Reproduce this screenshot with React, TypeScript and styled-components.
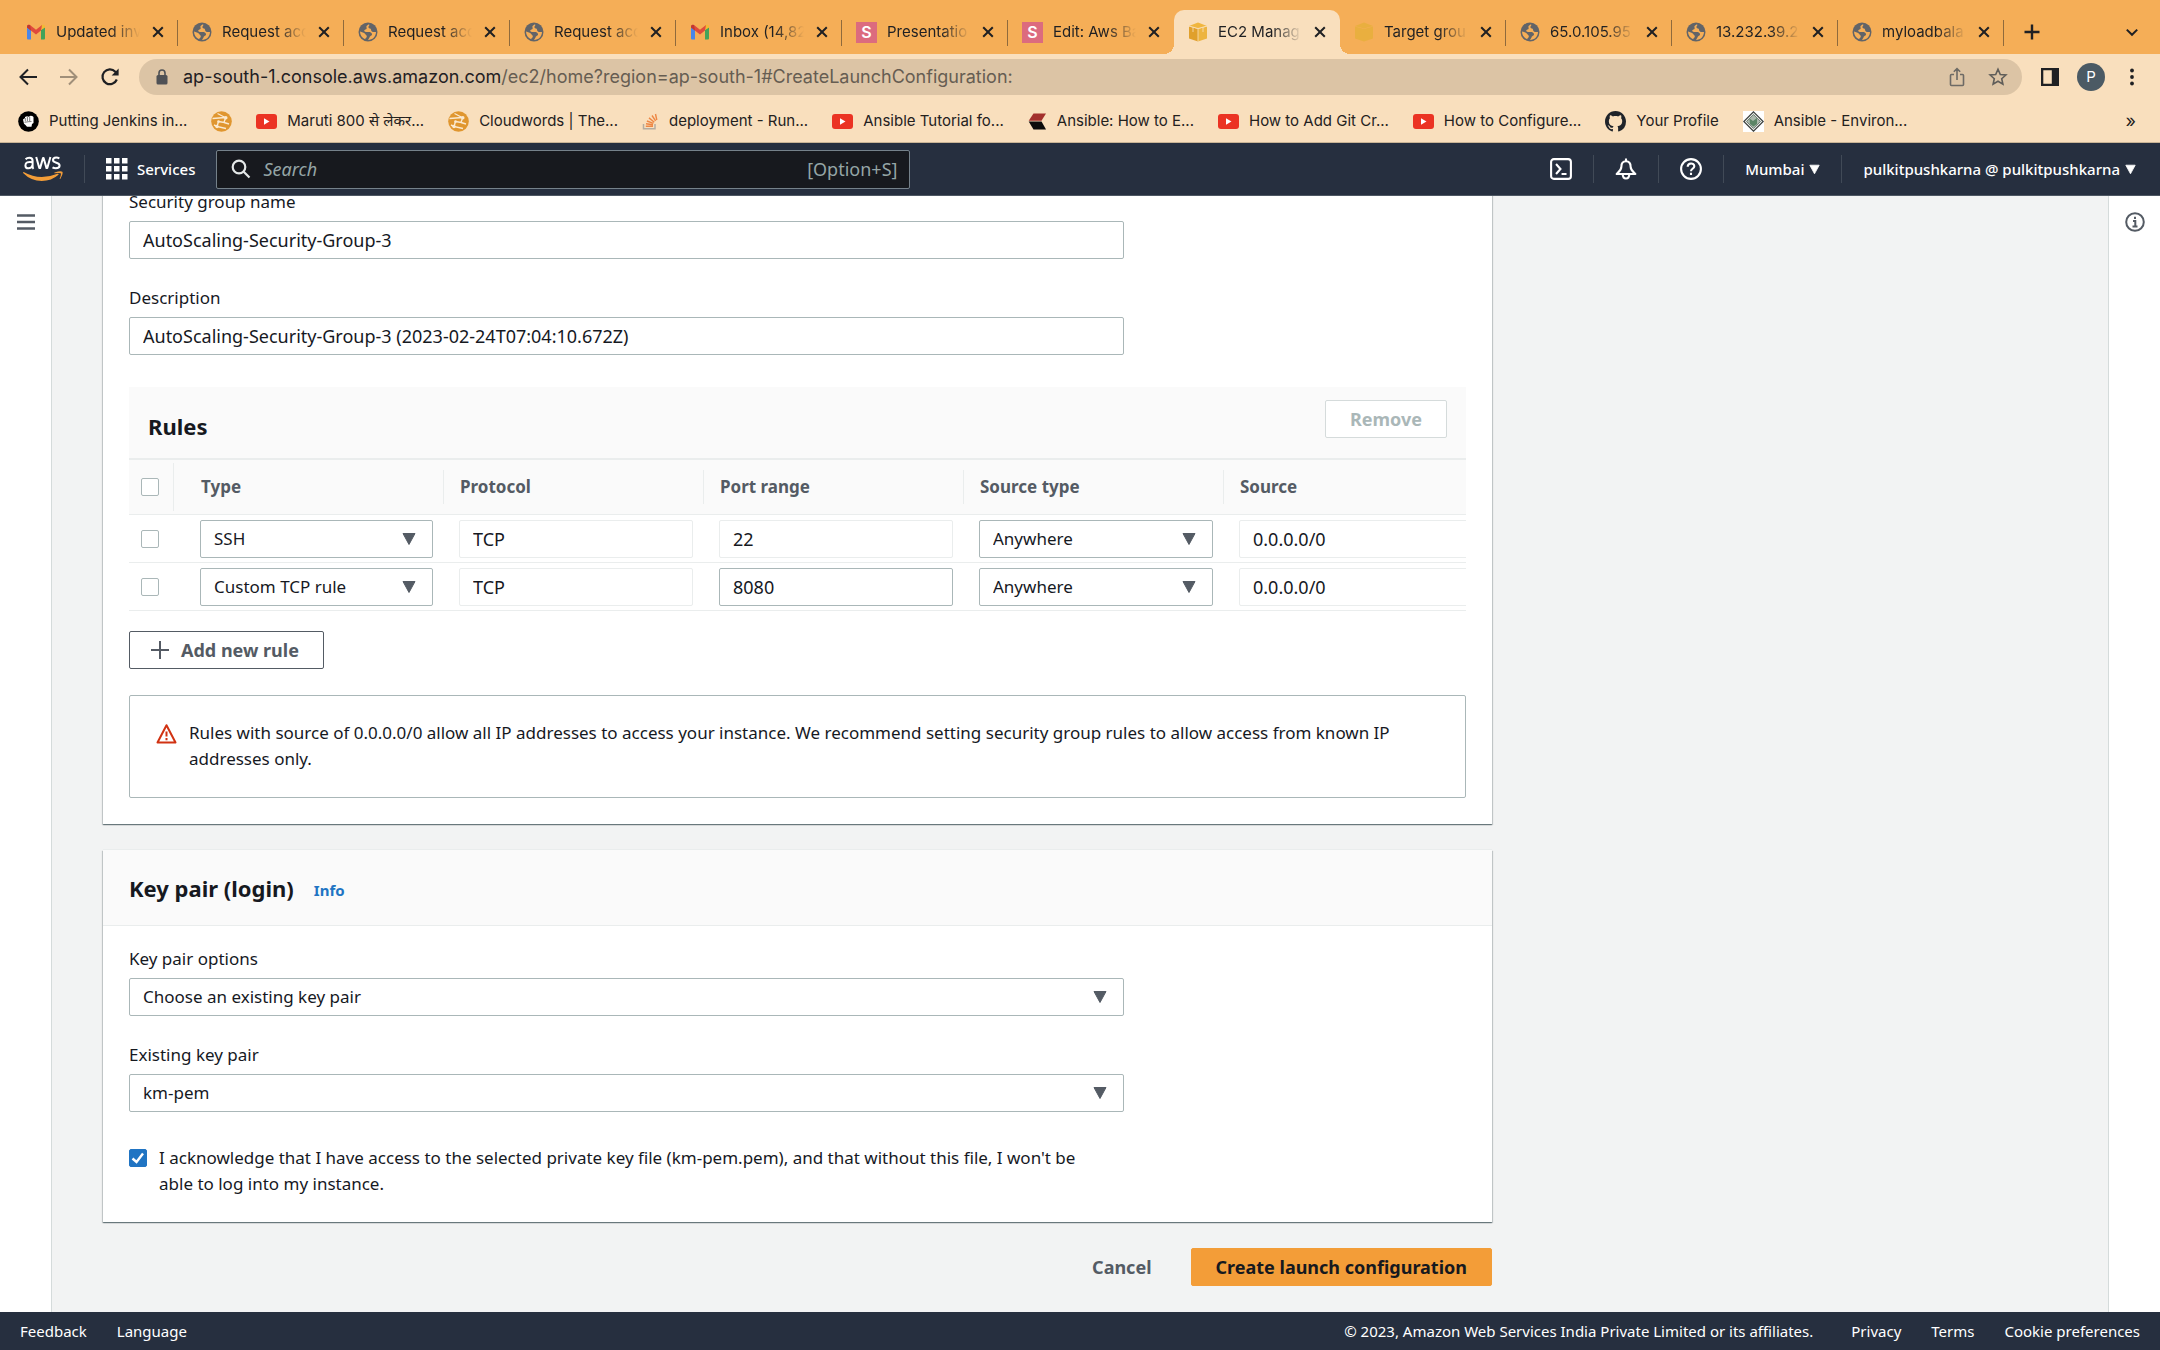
import React, { useLayoutEffect, useRef, useState } from "react";
import styled, { createGlobalStyle, css } from "styled-components";

const UI = `"Noto Sans", "Open Sans", sans-serif`;
const CHROME = `Inter, Roboto, "Noto Sans", sans-serif`;

const GlobalStyle = createGlobalStyle`
  *, *::before, *::after { box-sizing: border-box; }
  body { margin: 0; background: #f2f3f3; }
  button, input, select { font: inherit; color: inherit; margin: 0; }
  button { border: 0; padding: 0; background: none; cursor: pointer; }
  a { color: inherit; text-decoration: none; }
  svg { display: block; flex: none; }
`;

const Page = styled.div`
  height: 100vh;
  display: flex;
  flex-direction: column;
  font: 17px/26px ${UI};
  color: #16191f;
`;

/* ---------- browser window ---------- */

const TabStrip = styled.div`
  flex: none;
  height: 54px;
  padding: 10px 18px 0 12px;
  display: flex;
  background: #f5ae57;
  font: 15px/20px ${CHROME};
  color: #1f2023;
`;

const Tab = styled.div<{ $active?: boolean; $divided?: boolean }>`
  position: relative;
  flex: 0 1 166px;
  min-width: 0;
  height: 44px;
  padding: 0 12px 0 14px;
  display: flex;
  align-items: center;
  gap: 10px;
  ${(p) =>
    p.$divided &&
    css`
      &::after {
        content: "";
        position: absolute;
        right: 0;
        top: 10px;
        height: 26px;
        width: 1px;
        background: #8f6a3c;
      }
    `}
  ${(p) =>
    p.$active &&
    css`
      background: #f9dfbd;
      border-radius: 10px 10px 0 0;
      &::before,
      &::after {
        content: "";
        position: absolute;
        bottom: 0;
        width: 10px;
        height: 10px;
      }
      &::before {
        left: -10px;
        background: radial-gradient(circle at 0 0, transparent 10px, #f9dfbd 10px);
      }
      &::after {
        right: -10px;
        background: radial-gradient(circle at 100% 0, transparent 10px, #f9dfbd 10px);
      }
    `}
`;

const TabTitle = styled.span`
  flex: 1;
  min-width: 0;
  overflow: hidden;
  white-space: nowrap;
  mask-image: linear-gradient(90deg, #000 65%, transparent);
`;

const IconButton = styled.button`
  flex: none;
  display: flex;
  align-items: center;
  justify-content: center;
`;

const NewTab = styled(IconButton)`
  width: 32px;
  height: 44px;
  margin-left: 12px;
`;

const TabMenu = styled(IconButton)`
  width: 20px;
  height: 44px;
  margin-left: auto;
`;

const SLogo = styled.span`
  flex: none;
  width: 21px;
  height: 21px;
  background: #dc6b7e;
  color: #fff;
  font: 600 16px/21px ${CHROME};
  text-align: center;
`;

const Toolbar = styled.div`
  flex: none;
  height: 46px;
  padding: 0 18px;
  display: flex;
  align-items: center;
  background: #f9dfbd;
  color: #1f2023;
  font-family: ${CHROME};
`;

const NavButtons = styled.div`
  display: flex;
  gap: 21px;
  margin-right: 19px;
`;

const Omnibox = styled.div`
  flex: 1;
  height: 36px;
  padding: 0 14px 0 16px;
  display: flex;
  align-items: center;
  gap: 14px;
  border-radius: 18px;
  background: #dcc4a5;
  font-size: 18px;
  line-height: 24px;
`;

const Address = styled.a`
  flex: 1;
  white-space: nowrap;
  color: #665d52;
  b {
    font-weight: 400;
    color: #1f2023;
  }
`;

const OmniActions = styled.div`
  display: flex;
  gap: 22px;
`;

const WindowActions = styled.div`
  margin-left: 18px;
  display: flex;
  align-items: center;
  gap: 17px;
`;

const Avatar = styled.button`
  width: 28px;
  height: 28px;
  border-radius: 50%;
  background: #4b5a64;
  color: #fff;
  font-size: 15px;
  line-height: 28px;
`;

const Bookmarks = styled.nav`
  flex: none;
  height: 43px;
  padding: 0 24px 0 18px;
  display: flex;
  align-items: center;
  gap: 24px;
  background: #f9dfbd;
  border-bottom: 1px solid #c9b496;
  font: 15px/20px ${CHROME};
  color: #24211d;
`;

const Bookmark = styled.a`
  display: flex;
  align-items: center;
  gap: 10px;
  white-space: nowrap;
`;

const More = styled.button`
  margin-left: auto;
  font-size: 18px;
`;

/* ---------- console header ---------- */

const Header = styled.header`
  flex: none;
  height: 53px;
  padding: 0 24px 0 23px;
  display: flex;
  align-items: center;
  gap: 21px;
  background: #262f3f;
  border-bottom: 1px solid #4d5763;
  color: #fff;
  font-size: 15px;
  font-weight: 500;
`;

const Divider = styled.i`
  flex: none;
  width: 1px;
  height: 28px;
  background: #414a57;
`;

const SearchBox = styled.label`
  flex: 0 1 694px;
  height: 39px;
  padding: 0 12px 0 14px;
  display: flex;
  align-items: center;
  gap: 12px;
  background: #17191e;
  border: 1px solid #75818a;
  border-radius: 2px;
  color: #95a5a6;
  font-size: 18px;
  font-weight: 400;
  input {
    flex: 1;
    min-width: 0;
    padding: 0;
    border: 0;
    outline: 0;
    background: none;
  }
  input::placeholder {
    color: #95a5a6;
    font-style: italic;
    opacity: 1;
  }
`;

const HeaderTools = styled.div`
  margin-left: auto;
  display: flex;
  align-items: center;
  gap: 21px;
`;

const MenuButton = styled.button<{ $wide?: boolean }>`
  display: flex;
  align-items: center;
  gap: ${(p) => (p.$wide ? 9 : 5)}px;
  white-space: nowrap;
`;

/* ---------- console body ---------- */

const Body = styled.div`
  flex: 1;
  min-height: 0;
  display: flex;
`;

const Rail = styled.aside<{ $side: "left" | "right" }>`
  flex: none;
  width: 52px;
  padding-top: 16px;
  display: flex;
  justify-content: center;
  align-items: flex-start;
  background: #fff;
  ${(p) => (p.$side === "left" ? "border-right" : "border-left")}: 1px solid #d5dbdb;
`;

const Main = styled.main`
  flex: 1;
  min-width: 0;
  padding: 0 51px 26px;
  overflow-y: auto;
  scrollbar-width: none;
`;

const Column = styled.div`
  max-width: 1389px;
  display: flex;
  flex-direction: column;
  gap: 26px;
`;

const Card = styled.section`
  background: #fff;
  box-shadow: 0 1px 1px 0 rgba(0, 28, 36, 0.4), 1px 1px 1px 0 rgba(0, 28, 36, 0.15),
    -1px 1px 1px 0 rgba(0, 28, 36, 0.15), 0 -1px 0 0 #eaeded;
`;

const CardHeader = styled.header`
  height: 76px;
  padding: 0 26px;
  display: flex;
  align-items: center;
  gap: 20px;
  background: #fafafa;
  border-bottom: 1px solid #eaeded;
`;

const Title = styled.h2`
  margin: 0;
  font-size: 22px;
  line-height: 28px;
  font-weight: 700;
`;

const Info = styled.a`
  padding-top: 4px;
  color: #2074c3;
  font-size: 15px;
  font-weight: 700;
`;

const CardBody = styled.div<{ $top: number; $bottom: number }>`
  padding: ${(p) => p.$top}px 26px ${(p) => p.$bottom}px;
`;

const Field = styled.div`
  max-width: 995px;
  margin-bottom: 26px;
  display: flex;
  flex-direction: column;
  gap: 6px;
`;

const controlFrame = css`
  width: 100%;
  height: 38px;
  padding: 0 13px;
  border: 1px solid #aab7b8;
  border-radius: 2px;
  background: #fff;
  outline: 0;
`;

const TextInput = styled.input`
  ${controlFrame}
  font-size: 18px;
  &:read-only {
    border-color: #eaeded;
  }
`;

const SelectFrame = styled.div`
  display: grid;
  align-items: center;
  > * {
    grid-area: 1 / 1;
  }
  svg {
    justify-self: end;
    margin-right: 17px;
    pointer-events: none;
  }
`;

const SelectInput = styled.select`
  ${controlFrame}
  appearance: none;
`;

const Checkbox = styled.input`
  flex: none;
  appearance: none;
  display: block;
  width: 18px;
  height: 18px;
  border: 1px solid #aab7b8;
  border-radius: 2px;
  background: #fff;
`;

const TickFrame = styled.span`
  display: grid;
  padding-top: 4px;
  align-self: flex-start;
  > * {
    grid-area: 1 / 1;
  }
  input:checked {
    background: #2074c3;
    border-color: #2074c3;
  }
  svg {
    pointer-events: none;
  }
`;

const Button = styled.button<{ $kind?: "primary" | "link" }>`
  height: 38px;
  padding: 0 24px;
  display: inline-flex;
  align-items: center;
  gap: 11px;
  border: 1px solid #545b64;
  border-radius: 2px;
  background: #fff;
  color: #545b64;
  font-size: 18px;
  font-weight: 700;
  white-space: nowrap;
  &:disabled {
    border-color: #d5dbdb;
    color: #aab7b8;
  }
  ${(p) =>
    p.$kind === "primary" &&
    css`
      border-color: #f39d38;
      background: #f39d38;
      color: #16191f;
    `}
  ${(p) =>
    p.$kind === "link" &&
    css`
      border-color: transparent;
      background: none;
    `}
`;

const AddButton = styled(Button)`
  margin: 20px 0 26px;
  padding-left: 20px;
`;

const Rules = styled.section`
  padding-top: 6px;
`;

const RulesHeader = styled.header`
  height: 71px;
  padding: 0 19px;
  display: flex;
  align-items: center;
  justify-content: space-between;
  background: #fafafa;
`;

const RulesTitle = styled(Title)`
  padding-top: 6px;
`;

const RemoveSlot = styled.div`
  align-self: flex-start;
  padding-top: 13px;
`;

const TableFrame = styled.div`
  overflow: hidden;
`;

const Table = styled.table`
  width: 1355px;
  table-layout: fixed;
  border-collapse: separate;
  border-spacing: 0;
  text-align: left;
`;

const CheckCol = styled.col`
  width: 45px;
`;
const TypeCol = styled.col`
  width: 270px;
`;

const Th = styled.th`
  height: 57px;
  padding: 0;
  background: #fafafa;
  border-top: 2px solid #eaeded;
  border-bottom: 1px solid #eaeded;
  color: #545b64;
`;

const HeadCell = styled.div<{ $check?: boolean; $inset?: boolean; $last?: boolean }>`
  height: ${(p) => (p.$check ? 48 : 34)}px;
  padding-left: ${(p) => (p.$check ? 12 : p.$inset ? 27 : 16)}px;
  display: flex;
  align-items: center;
  border-right: ${(p) => (p.$last ? 0 : 1)}px solid #eaeded;
`;

const Td = styled.td<{ $check?: boolean; $inset?: boolean }>`
  height: 48px;
  padding: 0 11px 0 ${(p) => (p.$check ? 12 : p.$inset ? 26 : 15)}px;
  border-bottom: 1px solid #eaeded;
`;

const Alert = styled.div`
  min-height: 103px;
  padding: 24px 26px;
  display: flex;
  gap: 12px;
  border: 1px solid #aab7b8;
  border-radius: 2px;
  svg {
    margin-top: 3px;
  }
  p {
    margin: 0;
  }
`;

const Acknowledge = styled.label`
  max-width: 975px;
  margin-top: 33px;
  display: flex;
  gap: 12px;
`;

const Actions = styled.div`
  display: flex;
  justify-content: flex-end;
  gap: 14px;
`;

const Footer = styled.footer`
  flex: none;
  height: 38px;
  padding: 0 20px;
  display: flex;
  align-items: center;
  gap: 30px;
  background: #262f3f;
  color: #fff;
  font-size: 15px;
  line-height: 20px;
`;

const Copyright = styled.span`
  margin-left: auto;
  margin-right: 8px;
`;

/* ---------- icons ---------- */

const Line = ({ size = 20, w = 2, children }: { size?: number; w?: number; children: React.ReactNode }) => (
  <svg width={size} height={size} viewBox="0 0 20 20" fill="none" stroke="currentColor" strokeWidth={w} aria-hidden="true">
    {children}
  </svg>
);

const Caret = ({ size = 14, color = "currentColor" }: { size?: number; color?: string }) => (
  <svg width={size} height={size} viewBox="0 0 14 14" aria-hidden="true">
    <path d="M1 1.500h12L7 12.500z" fill={color} stroke={color} strokeLinejoin="round" />
  </svg>
);

const Gmail = () => (
  <svg width="20" height="20" viewBox="0 0 20 20" aria-hidden="true">
    <path d="M1 5v11.500q0 1 1 1h3V8z" fill="#4a86e8" />
    <path d="M19 5v11.500q0 1-1 1h-3V8z" fill="#43a35a" />
    <path d="M15 8V4l1-1q3-1 3 2v.5z" fill="#f2bb32" />
    <path d="M1 5.500V5q0-3 3-2l6 4.800L16 3l-1 5.500-5 4z" fill="#e04a3c" />
    <path d="M1 5.500V5q0-3 3-2l1 5.500z" fill="#c03830" />
  </svg>
);

const Globe = () => (
  <svg width="20" height="20" viewBox="0 0 20 20" aria-hidden="true">
    <circle cx="10" cy="10" r="9.500" fill="#626468" />
    <path d="M11 2.200C8.500 3.500 8 4.200 8.600 5.800c.5 1.500-1 1.700-2 2.200s0 2 1.500 2H12c1 1 2 1 2 2.500s-2 1-2.500 3L10 18c4.500 0 8-3.600 8-8h-3c-1 0-2-1-2-2.500s-2-.5-2.500-2S12 4 11 2.200z" fill="#f5ae57" />
    <path d="M2 9.500c2 .5 4 1 5.200 2.500s2 1.500 1.500 3-1.500 1-1.500 2.300C4 16 2 13 2 9.500z" fill="#f5ae57" />
  </svg>
);

const Cube = ({ pale }: { pale?: boolean }) => (
  <svg width="20" height="20" viewBox="0 0 20 20" opacity={pale ? 0.55 : 1} aria-hidden="true">
    <path d="M1 4.500 10 7v12.500L1 16.500z" fill={pale ? "#e0b02c" : "#e0a02c"} />
    <path d="M19 4.500 10 7v12.500l9-3z" fill={pale ? "#e0b02c" : "#edb440"} />
    <path d="m1 4 9-3.500L19 4l-9 2.500z" fill={pale ? "#e0b02c" : "#f0b63f"} />
    {!pale && <path d="M10 6.500v13M5 5.200V10M15 5.200V10M1 4l9 2.500L19 4" stroke="#f9dfbd" strokeWidth=".8" fill="none" />}
  </svg>
);

const YouTube = () => (
  <svg width="21" height="15" viewBox="0 0 21 15" aria-hidden="true">
    <rect width="21" height="15" rx="3" fill="#eb3323" />
    <path d="M8 4.200v6.600l5.500-3.300z" fill="#fff" />
  </svg>
);

const Fist = () => (
  <svg width="21" height="21" viewBox="0 0 21 21" aria-hidden="true">
    <circle cx="10.500" cy="10.500" r="10.300" fill="#000" />
    <path d="M5 8.500 7 7V6l2-.7 1.500.5 2-1 1.800.2 1.200 1V12l-1.500 1-.5 2.800H9L7.500 14 6 12.800z" fill="#fff" />
    <path d="M7.300 7v3.300M9.400 6v4M11.700 5.600v4.400M6.500 11.300l4-.6 3-.2" stroke="#000" strokeWidth=".5" fill="none" />
  </svg>
);

const Loop = () => (
  <svg width="21" height="21" viewBox="0 0 21 21" aria-hidden="true">
    <circle cx="10.500" cy="10.500" r="10.300" fill="#e0962f" />
    <path
      d="M1.500 7.500 14.500 6.500M6.500 2.500 16 7.500M14.500 7 13 11.500 7.500 10.500M7.500 10.500 6 15.500 15 17.500M6 15.500 3 14M13 11.500l5 1.500"
      stroke="#fbe9cf"
      strokeWidth="1.400"
      fill="none"
    />
    <circle cx="14.800" cy="6.800" r="1.700" fill="#fbe9cf" />
    <circle cx="7.500" cy="10.500" r="1.300" fill="#fbe9cf" />
    <circle cx="6" cy="15.500" r="1.700" fill="#fbe9cf" />
  </svg>
);

const StackOverflow = () => (
  <svg width="17" height="17" viewBox="0 0 17 17" fill="none" aria-hidden="true">
    <path d="M1.500 11v4.800H13V11" stroke="#b5aca0" strokeWidth="1.500" />
    <path d="M3.800 13.300H11M4 10.800l7 .9M4.900 8l6.500 2.400M7 4.900l5.300 4.400M10 2.500l3.600 5.400M13.500 1l1.300 6" stroke="#ee8744" strokeWidth="1.400" />
  </svg>
);

const Chevron = () => (
  <svg width="19" height="17" viewBox="0 0 19 17" aria-hidden="true">
    <path d="M5.500.5H18l-4.500 7.300H.7z" fill="#a3302c" />
    <path d="M.7 8.600h12.800L18 16.500H5.500z" fill="#0b0b0b" />
  </svg>
);

const GitHub = () => (
  <svg width="21" height="21" viewBox="0 0 16 16" aria-hidden="true">
    <path
      fill="#20242a"
      d="M8 0C3.580 0 0 3.580 0 8c0 3.540 2.290 6.530 5.470 7.590.4.070.55-.17.55-.38 0-.19-.01-.82-.01-1.490-2.010.37-2.530-.49-2.690-.94-.09-.23-.48-.94-.82-1.130-.28-.15-.68-.52-.01-.53.63-.01 1.080.58 1.230.82.72 1.210 1.870.87 2.330.66.07-.52.28-.87.51-1.070-1.780-.2-3.640-.89-3.640-3.950 0-.87.31-1.590.82-2.150-.08-.2-.36-1.020.08-2.120 0 0 .67-.21 2.200.82.64-.18 1.320-.27 2-.27s1.360.09 2 .27c1.530-1.040 2.200-.82 2.200-.82.44 1.100.16 1.920.08 2.120.51.56.82 1.270.82 2.150 0 3.070-1.870 3.750-3.650 3.950.29.25.54.73.54 1.480 0 1.070-.01 1.930-.01 2.200 0 .21.15.46.55.38A8.010 8.010 0 0 0 16 8c0-4.420-3.580-8-8-8z"
    />
  </svg>
);

const Crest = () => (
  <svg width="21" height="21" viewBox="0 0 21 21" aria-hidden="true">
    <rect width="21" height="21" fill="#fff" />
    <path d="m10.500.8 9.700 9.700-9.700 9.700L.8 10.500z" fill="#e8ece8" stroke="#3b3f3d" strokeWidth="1.200" />
    <path d="m10.500 3.500 7 7-7 7-7-7z" fill="#aab8ac" stroke="#5e6b62" strokeWidth=".8" />
    <path d="M6.500 7.500 10 10l4-3v6l-3.500 2.500L7 13z" fill="#5b8566" />
  </svg>
);

const AwsLogo = () => (
  <svg width="40" height="26" viewBox="0 0 40 26" aria-hidden="true">
    <g fill="none" stroke="#fff" strokeWidth="2" strokeLinejoin="round">
      <path d="M2.600 3.200Q4 1.700 6.300 1.700q3.300 0 3.300 3.200v5q0 2 .9 3M9.600 6.200Q2.400 5 2.400 9.400q0 2.900 3 2.900 3.200 0 4.200-3.300" />
      <path d="m13.200 1 3.100 11.100h.8L20 2h.6l2.900 10.100h.8L27.400 1" />
      <path d="M36.400 2.300q-1.400-.7-3.200-.7-3.200 0-3.200 2.500 0 1.800 2.700 2.400 3.900 1 3.900 3 0 2.800-3.700 2.800-2 0-3.400-.9" />
    </g>
    <path d="M0 16.400q.4-.6 1.200-.2Q9.500 21 18.800 21q8 0 15.700-3.200 1.500-.4 1 1Q28.500 25 18.800 25 8 25 .1 17z" fill="#f39d38" />
    <path d="M31.500 16.600q6.500-2.400 7.800-.8t-2 7.200q-.8.200-.5-.7 1.600-4 .9-5-1-.7-6 0-.6-.2-.2-.7z" fill="#f39d38" />
  </svg>
);

/* ---------- data ---------- */

const tabs: { icon: React.ReactNode; title: string; active?: boolean; divided?: boolean }[] = [
  { icon: <Gmail />, title: "Updated inv", divided: true },
  { icon: <Globe />, title: "Request acc", divided: true },
  { icon: <Globe />, title: "Request acc", divided: true },
  { icon: <Globe />, title: "Request acc", divided: true },
  { icon: <Gmail />, title: "Inbox (14,82", divided: true },
  { icon: <SLogo>S</SLogo>, title: "Presentatio", divided: true },
  { icon: <SLogo>S</SLogo>, title: "Edit: Aws Ba" },
  { icon: <Cube />, title: "EC2 Manag", active: true },
  { icon: <Cube pale />, title: "Target grou", divided: true },
  { icon: <Globe />, title: "65.0.105.95", divided: true },
  { icon: <Globe />, title: "13.232.39.2", divided: true },
  { icon: <Globe />, title: "myloadbala", divided: true },
];

const bookmarks: { icon: React.ReactNode; title?: string }[] = [
  { icon: <Fist />, title: "Putting Jenkins in..." },
  { icon: <Loop /> },
  { icon: <YouTube />, title: "Maruti 800 से लेकर..." },
  { icon: <Loop />, title: "Cloudwords | The..." },
  { icon: <StackOverflow />, title: "deployment - Run..." },
  { icon: <YouTube />, title: "Ansible Tutorial fo..." },
  { icon: <Chevron />, title: "Ansible: How to E..." },
  { icon: <YouTube />, title: "How to Add Git Cr..." },
  { icon: <YouTube />, title: "How to Configure..." },
  { icon: <GitHub />, title: "Your Profile" },
  { icon: <Crest />, title: "Ansible - Environ..." },
];

const rules = [
  { type: "SSH", protocol: "TCP", port: "22", sourceType: "Anywhere", source: "0.0.0.0/0", editable: false },
  { type: "Custom TCP rule", protocol: "TCP", port: "8080", sourceType: "Anywhere", source: "0.0.0.0/0", editable: true },
];

const Select = ({ value, id, label }: { value: string; id?: string; label?: string }) => (
  <SelectFrame>
    <SelectInput id={id} aria-label={label} defaultValue={value}>
      <option>{value}</option>
    </SelectInput>
    <Caret color="#545b64" />
  </SelectFrame>
);

const BrowserChrome = () => (
  <>
    <TabStrip>
      {tabs.map((t, i) => (
        <Tab key={i} $active={t.active} $divided={t.divided}>
          {t.icon}
          <TabTitle>{t.title}</TabTitle>
          <IconButton aria-label="Close tab">
            <Line size={16} w={2.5}>
              <path d="m4 4 12 12M16 4 4 16" />
            </Line>
          </IconButton>
        </Tab>
      ))}
      <NewTab aria-label="New tab">
        <Line size={20} w={2.4}>
          <path d="M10 2.500v15M2.500 10h15" />
        </Line>
      </NewTab>
      <TabMenu aria-label="Search tabs">
        <Line size={16} w={2.5}>
          <path d="m3.500 7 6.500 6.500L16.500 7" />
        </Line>
      </TabMenu>
    </TabStrip>
    <Toolbar>
      <NavButtons>
        <IconButton aria-label="Back">
          <Line>
            <path d="M19 10H3M10 2.500 2.500 10l7.500 7.500" />
          </Line>
        </IconButton>
        <IconButton aria-label="Forward">
          <svg width="20" height="20" viewBox="0 0 20 20" fill="none" stroke="#a08f79" strokeWidth="2" aria-hidden="true">
            <path d="M1 10h16M10 2.500l7.500 7.500-7.500 7.500" />
          </svg>
        </IconButton>
        <IconButton aria-label="Reload">
          <Line w={2.2}>
            <path d="M16.800 12.500a7.400 7.400 0 1 1-1.500-7.800l2 2" />
            <path d="M18.600 1.500v7h-7z" fill="currentColor" stroke="none" />
          </Line>
        </IconButton>
      </NavButtons>
      <Omnibox>
        <svg width="14" height="16" viewBox="0 0 14 16" aria-hidden="true">
          <rect x="1.500" y="6" width="11" height="9.500" rx="1.500" fill="#4f5155" />
          <path d="M4 7V4a3 3 0 0 1 6 0v3" fill="none" stroke="#4f5155" strokeWidth="1.600" />
        </svg>
        <Address href="#CreateLaunchConfiguration:">
          <b>ap-south-1.console.aws.amazon.com</b>/ec2/home?region=ap-south-1#CreateLaunchConfiguration:
        </Address>
        <OmniActions>
          <IconButton aria-label="Share">
            <svg width="18" height="20" viewBox="0 0 18 20" fill="none" stroke="#6d6a65" strokeWidth="1.600" aria-hidden="true">
              <path d="M6 7.500H3.500a1 1 0 0 0-1 1v9a1 1 0 0 0 1 1h11a1 1 0 0 0 1-1v-9a1 1 0 0 0-1-1H12M9 13V2M5.800 4.800 9 1.700l3.200 3.100" />
            </svg>
          </IconButton>
          <IconButton aria-label="Bookmark this tab">
            <svg width="20" height="20" viewBox="0 0 20 20" fill="none" stroke="#5f5d59" strokeWidth="1.600" aria-hidden="true">
              <path d="m10 2.300 2.300 5.200 5.600.5-4.200 3.700 1.200 5.500-4.900-2.900-4.900 2.900 1.200-5.500L2.100 8l5.600-.5z" />
            </svg>
          </IconButton>
        </OmniActions>
      </Omnibox>
      <WindowActions>
        <IconButton aria-label="Side panel">
          <svg width="20" height="20" viewBox="0 0 20 20" aria-hidden="true">
            <path d="M1 1h18v18H1zM3.300 3.300v13.400h8.500V3.300z" fill="#1f2023" fillRule="evenodd" />
          </svg>
        </IconButton>
        <Avatar>P</Avatar>
        <IconButton aria-label="Menu">
          <svg width="20" height="20" viewBox="0 0 20 20" fill="#1f2023" aria-hidden="true">
            <circle cx="10" cy="3.500" r="1.900" />
            <circle cx="10" cy="10" r="1.900" />
            <circle cx="10" cy="16.500" r="1.900" />
          </svg>
        </IconButton>
      </WindowActions>
    </Toolbar>
    <Bookmarks aria-label="Bookmarks">
      {bookmarks.map((b, i) => (
        <Bookmark key={i} href="#" aria-label={b.title ?? "Bookmark"}>
          {b.icon}
          {b.title}
        </Bookmark>
      ))}
      <More aria-label="More bookmarks">»</More>
    </Bookmarks>
  </>
);

const ConsoleHeader = () => (
  <Header>
    <a href="#" aria-label="AWS home">
      <AwsLogo />
    </a>
    <Divider />
    <MenuButton $wide>
      <svg width="22" height="22" viewBox="0 0 22 22" fill="#fff" aria-hidden="true">
        {[0, 8, 16].map((y) => [0, 8, 16].map((x) => <rect key={`${x}-${y}`} x={x} y={y} width="5.500" height="5.500" />))}
      </svg>
      Services
    </MenuButton>
    <SearchBox>
      <svg width="20" height="20" viewBox="0 0 20 20" fill="none" stroke="#e4e8e8" strokeWidth="2.200" aria-hidden="true">
        <circle cx="8" cy="8" r="6.300" />
        <path d="m12.500 12.500 6 6" />
      </svg>
      <input type="search" placeholder="Search" aria-label="Search" />
      [Option+S]
    </SearchBox>
    <HeaderTools>
      <IconButton aria-label="CloudShell">
        <Line size={22} w={1.9}>
          <rect x="1" y="1" width="18" height="18" rx="2.500" />
          <path d="m5.500 5.500 4 4.500-4 4.500M10.500 14.500h4.500" />
        </Line>
      </IconButton>
      <Divider />
      <IconButton aria-label="Notifications">
        <Line size={22} w={1.9}>
          <path d="M10 .5V3M10 3C7 3 5.800 5 5.800 8c0 3-1.800 4.200-4.300 6.500h17c-2.500-2.300-4.300-3.500-4.300-6.500 0-3-1.200-5-4.200-5zM7 14.500c0 5.500 6 5.500 6 0" strokeLinejoin="round" />
        </Line>
      </IconButton>
      <Divider />
      <IconButton aria-label="Help">
        <Line size={22} w={1.9}>
          <circle cx="10" cy="10" r="9" />
          <path d="M7 8c0-4 6-4 6-.5 0 2.300-3 2.300-3 4.500M10 13.500v2" />
        </Line>
      </IconButton>
      <Divider />
      <MenuButton>
        Mumbai <Caret size={11} />
      </MenuButton>
      <Divider />
      <MenuButton>
        pulkitpushkarna @ pulkitpushkarna <Caret size={11} />
      </MenuButton>
    </HeaderTools>
  </Header>
);

const RulesPanel = () => (
  <Rules>
    <RulesHeader>
      <RulesTitle as="h3">Rules</RulesTitle>
      <RemoveSlot>
        <Button disabled>Remove</Button>
      </RemoveSlot>
    </RulesHeader>
    <TableFrame>
      <Table>
        <colgroup>
          <CheckCol />
          <TypeCol />
          <col />
          <col />
          <col />
          <col />
        </colgroup>
        <thead>
          <tr>
            <Th>
              <HeadCell $check>
                <Checkbox type="checkbox" aria-label="Select all rules" />
              </HeadCell>
            </Th>
            {["Type", "Protocol", "Port range", "Source type", "Source"].map((h, i) => (
              <Th key={h} scope="col">
                <HeadCell $inset={i === 0} $last={i === 4}>
                  {h}
                </HeadCell>
              </Th>
            ))}
          </tr>
        </thead>
        <tbody>
          {rules.map((r) => (
            <tr key={r.type}>
              <Td $check>
                <Checkbox type="checkbox" aria-label={`Select ${r.type}`} />
              </Td>
              <Td $inset>
                <Select value={r.type} label="Type" />
              </Td>
              <Td>
                <TextInput aria-label="Protocol" defaultValue={r.protocol} readOnly />
              </Td>
              <Td>
                <TextInput aria-label="Port range" defaultValue={r.port} readOnly={!r.editable} />
              </Td>
              <Td>
                <Select value={r.sourceType} label="Source type" />
              </Td>
              <Td>
                <TextInput aria-label="Source" defaultValue={r.source} readOnly />
              </Td>
            </tr>
          ))}
        </tbody>
      </Table>
    </TableFrame>
    <AddButton>
      <Line size={20} w={2}>
        <path d="M10 1v18M1 10h18" />
      </Line>
      Add new rule
    </AddButton>
  </Rules>
);

export default function App() {
  const main = useRef<HTMLElement>(null);
  const [agreed, setAgreed] = useState(true);

  useLayoutEffect(() => {
    if (main.current) main.current.scrollTop = main.current.scrollHeight;
  }, []);

  return (
    <Page>
      <GlobalStyle />
      <BrowserChrome />
      <ConsoleHeader />
      <Body>
        <Rail $side="left">
          <IconButton aria-label="Open navigation">
            <svg width="18" height="20" viewBox="0 0 18 20" stroke="#545b64" strokeWidth="2.400" aria-hidden="true">
              <path d="M0 3.500h18M0 10h18M0 16.500h18" />
            </svg>
          </IconButton>
        </Rail>
        <Main ref={main}>
          <Column>
            <Card>
              <CardBody $top={26} $bottom={26}>
                <Field>
                  <label htmlFor="group-name">Security group name</label>
                  <TextInput id="group-name" defaultValue="AutoScaling-Security-Group-3" />
                </Field>
                <Field>
                  <label htmlFor="description">Description</label>
                  <TextInput id="description" defaultValue="AutoScaling-Security-Group-3 (2023-02-24T07:04:10.672Z)" />
                </Field>
                <RulesPanel />
                <Alert role="alert">
                  <svg width="21" height="21" viewBox="0 0 21 21" fill="none" stroke="#d13212" strokeWidth="2" aria-hidden="true">
                    <path d="M10.500 2.200 19.500 19.500h-18z" strokeLinejoin="round" />
                    <path d="M10.500 8.500v5M10.500 15v2.200" />
                  </svg>
                  <p>
                    Rules with source of 0.0.0.0/0 allow all IP addresses to access your instance. We recommend setting security
                    group rules to allow access from known IP addresses only.
                  </p>
                </Alert>
              </CardBody>
            </Card>
            <Card>
              <CardHeader>
                <Title>Key pair (login)</Title>
                <Info href="#">Info</Info>
              </CardHeader>
              <CardBody $top={20} $bottom={25}>
                <Field>
                  <label htmlFor="key-options">Key pair options</label>
                  <Select id="key-options" value="Choose an existing key pair" />
                </Field>
                <Field>
                  <label htmlFor="key-pair">Existing key pair</label>
                  <Select id="key-pair" value="km-pem" />
                </Field>
                <Acknowledge>
                  <TickFrame>
                    <Checkbox type="checkbox" checked={agreed} onChange={() => setAgreed(!agreed)} />
                    {agreed && (
                      <svg width="18" height="18" viewBox="0 0 18 18" fill="none" stroke="#fff" strokeWidth="2.400" aria-hidden="true">
                        <path d="m3.500 9.500 4 3.500 6.500-8.500" />
                      </svg>
                    )}
                  </TickFrame>
                  <span>
                    I acknowledge that I have access to the selected private key file (km-pem.pem), and that without this file, I
                    won't be able to log into my instance.
                  </span>
                </Acknowledge>
              </CardBody>
            </Card>
            <Actions>
              <Button $kind="link">Cancel</Button>
              <Button $kind="primary">Create launch configuration</Button>
            </Actions>
          </Column>
        </Main>
        <Rail $side="right">
          <IconButton aria-label="Open help panel">
            <svg width="20" height="20" viewBox="0 0 20 20" fill="none" stroke="#545b64" strokeWidth="2" aria-hidden="true">
              <circle cx="10" cy="10" r="8.800" />
              <path d="M8 9h2.300v5.500M7.500 14.500h5M10 4.800v2.200" />
            </svg>
          </IconButton>
        </Rail>
      </Body>
      <Footer>
        <a href="#">Feedback</a>
        <a href="#">Language</a>
        <Copyright>© 2023, Amazon Web Services India Private Limited or its affiliates.</Copyright>
        <a href="#">Privacy</a>
        <a href="#">Terms</a>
        <a href="#">Cookie preferences</a>
      </Footer>
    </Page>
  );
}
